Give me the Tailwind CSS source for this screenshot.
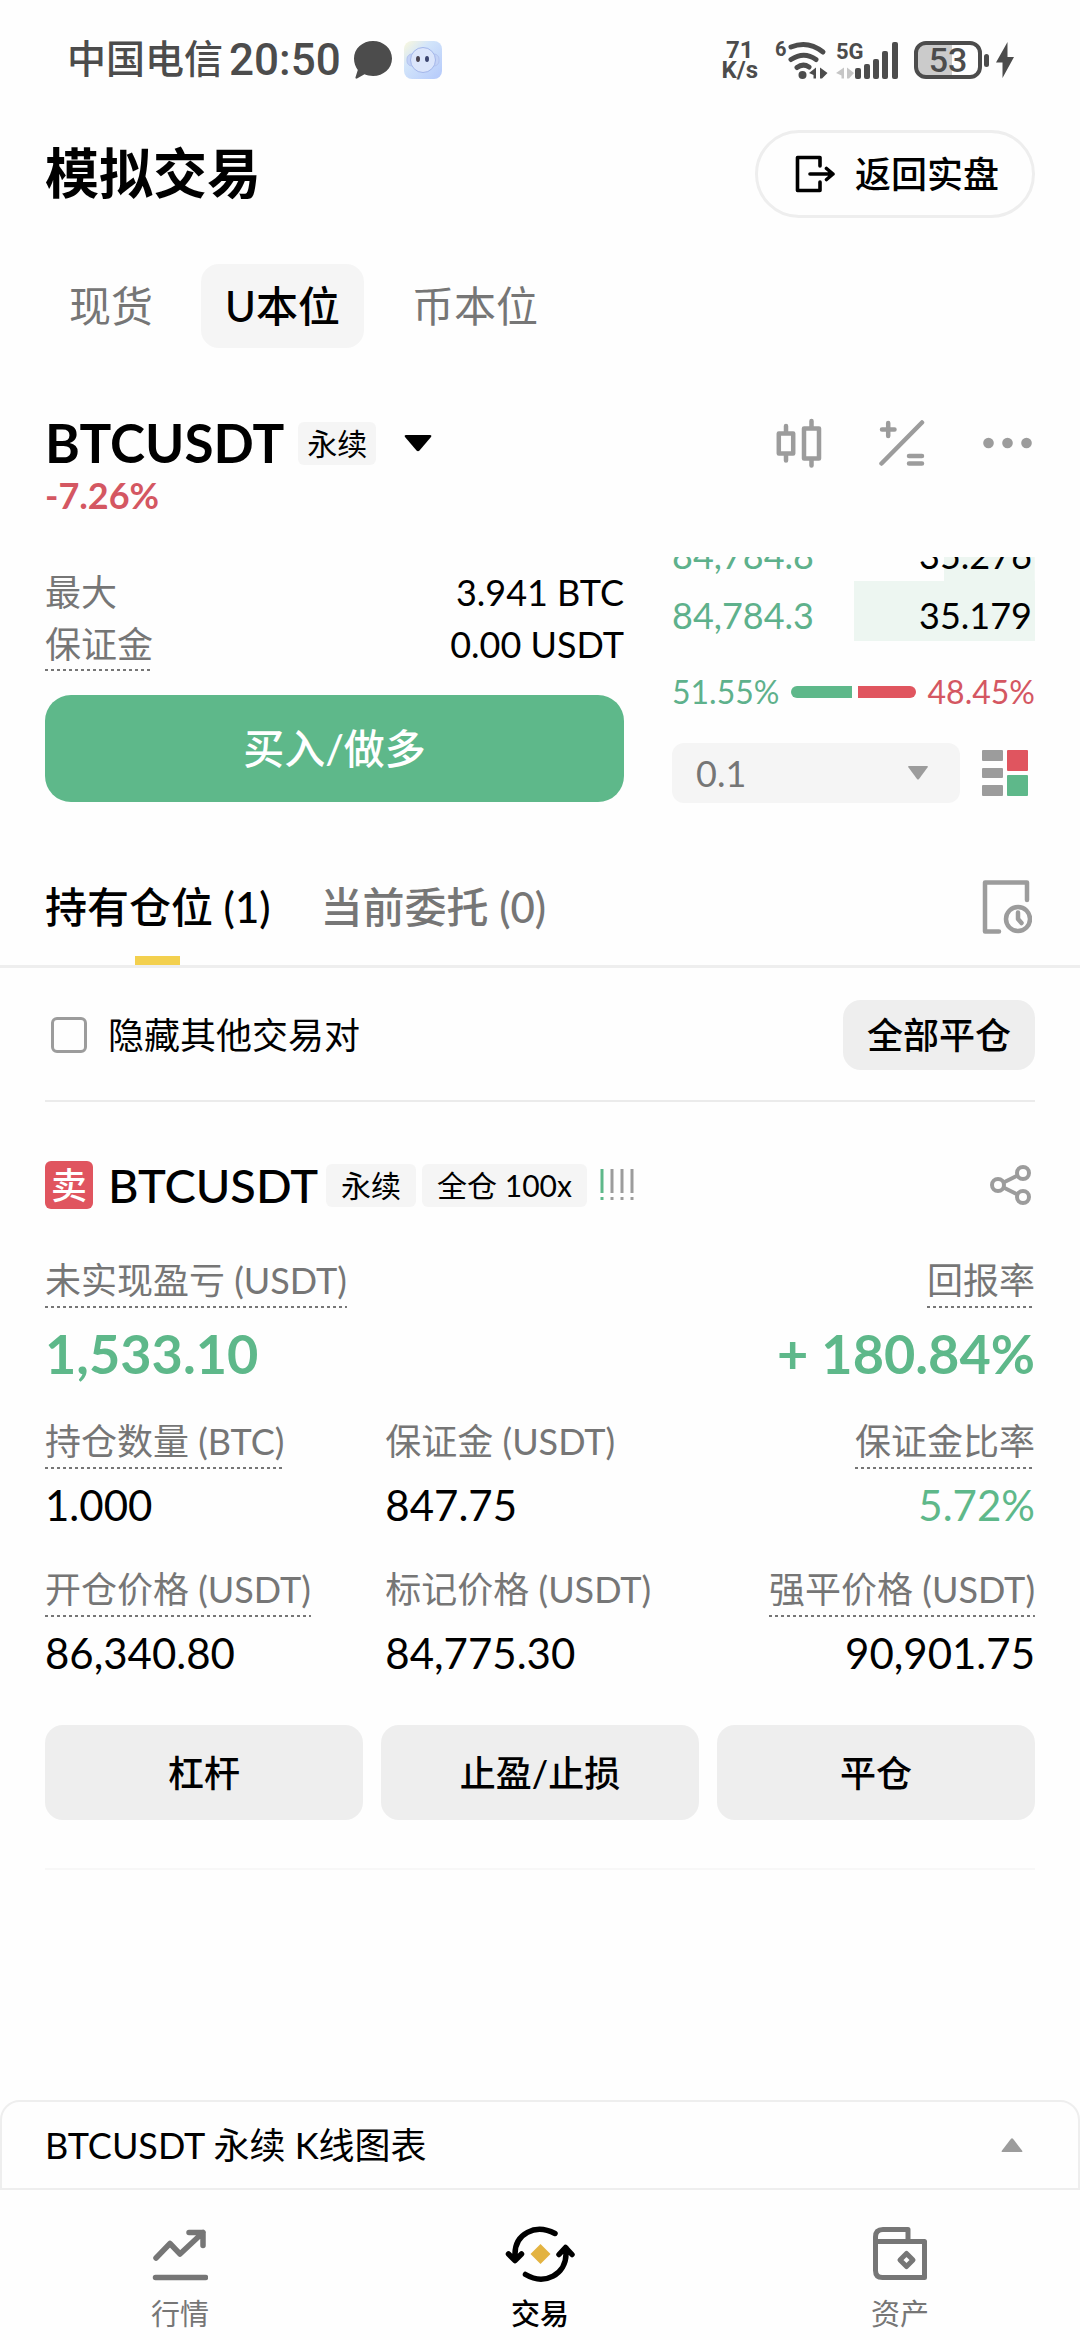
<!DOCTYPE html>
<html lang="zh-CN">
<head>
  <meta charset="UTF-8" />
  <meta name="viewport" content="width=device-width, initial-scale=1.0"/>
  <title>模拟交易</title>
  <script src="https://cdn.jsdelivr.net/npm/@tailwindcss/browser@4"></script>
</head>
<body class="bg-[#fefefe] text-black font-['Lato','Noto_Sans_CJK_SC',sans-serif]">
  <div class="min-h-screen flex flex-col">

    <!-- Status Bar -->
    <div class="h-[120px] pl-[67px] pr-[66px] flex items-center justify-between text-[#4c4c4c] font-['Roboto','Noto_Sans_CJK_SC',sans-serif] font-medium">
      <div class="flex items-center">
        <span class="text-[39px] leading-[48px]">中国电信</span>
        <span class="ml-[6px] text-[44px] leading-[48px]">20:50</span>
        <svg class="ml-[13px] w-[38px] h-[38px]" viewBox="0 0 38 38" fill="#4c4c4c"><path d="M19 0C29.500 0 38 7.500 38 17.500S29.500 35 19 35c-3 0-6-.6-8.500-1.700L3 37.500c-1 .5-1.800-.2-1.500-1.200L3.800 29C1.500 26 0 22 0 17.500 0 7.500 8.500 0 19 0z"/></svg>
        <svg class="ml-[12px] w-[38px] h-[38px]" viewBox="0 0 38 38">
          <defs><linearGradient id="app" x1="0" y1="0" x2="1" y2="1"><stop offset="0" stop-color="#fbf9dc"/><stop offset=".35" stop-color="#d3e5fa"/><stop offset="1" stop-color="#b4c9fb"/></linearGradient></defs>
          <rect width="38" height="38" rx="8" fill="url(#app)"/>
          <rect x="3" y="13" width="32" height="12" rx="5" fill="#c3d2f6" stroke="#b3c3ef"/>
          <circle cx="19" cy="19" r="12.500" fill="#dbe5fb" stroke="#a3b6ea"/>
          <ellipse cx="14" cy="18" rx="2" ry="3" fill="#4a4350"/><ellipse cx="23" cy="18" rx="2" ry="3" fill="#3c4570"/>
        </svg>
      </div>
      <div class="flex items-center">
        <div class="text-[24px] leading-[20px] font-bold text-center">71<br>K/s</div>
        <svg class="ml-[16px] w-[54px] h-[46px]" viewBox="772 36 54 46" fill="none" stroke="#4c4c4c" stroke-width="5" stroke-linecap="round">
          <text x="773" y="55" font-size="20" font-weight="700" fill="#4c4c4c" stroke="none">6</text>
          <path d="M789 46Q806 39 821 51M789 58.500Q802 50 814 58.500M795 66.500Q801 62 807 66"/>
          <circle cx="800.500" cy="74" r="4" fill="#4c4c4c" stroke="none"/>
          <path d="M814 66.500v11h-2.500v-3.500l-4.500-2zM818 66.500v11h2l5.500-5.500z" fill="#4c4c4c" stroke="none"/>
        </svg>
        <svg class="ml-[8px] w-[63px] h-[46px]" viewBox="835 36 63 46" fill="#4c4c4c">
          <text x="835" y="58" font-size="22" font-weight="700">5G</text>
          <path d="M843 66.500v11h-2.500v-3l-5.500-2.500zM846 66.500v11h2l5-5.500z" fill="#c6c6c6"/>
          <rect x="854" y="67" width="6" height="11" rx="2"/><rect x="863" y="63" width="6" height="15" rx="2"/><rect x="872" y="58" width="6" height="20" rx="2"/><rect x="881" y="50" width="6" height="28" rx="2"/><rect x="891" y="41" width="6" height="37" rx="2"/>
        </svg>
        <div class="ml-[15px] w-[68px] h-[38px] border-4 border-[#4c4c4c] rounded-[12px] bg-[linear-gradient(90deg,#cbcbcb_57%,#fefefe_57%)] text-[34px] leading-[30px] text-center">53</div>
        <div class="ml-[2px] w-[5px] h-[13px] rounded-full bg-[#4c4c4c]"></div>
        <svg class="ml-[7px] w-[18px] h-[36px]" viewBox="0 0 18 36" fill="#4c4c4c"><path d="M11.500 0v15H18L6.500 36v-15.500H0z"/></svg>
      </div>
    </div>

    <!-- Header -->
    <header class="px-[45px] pt-[10px] flex items-center justify-between">
      <h1 class="text-[54px] leading-[64px] font-bold">模拟交易</h1>
      <button class="h-[88px] pl-[37px] pr-[33px] border-3 border-[#eee] rounded-full flex items-center text-[36px] font-medium">
        <svg class="w-[40px] h-[38px] mr-[20px]" viewBox="0 0 40 38" fill="none" stroke="#000" stroke-width="3.600" stroke-linecap="round" stroke-linejoin="round"><path d="M25 11V2.500H2.500v33H25V27M15 19h23M31.500 13.500L38 19l-6.500 5.500"/></svg>
        返回实盘
      </button>
    </header>

    <nav class="mt-[46px] pl-[45px] flex text-[42px] leading-[84px] text-[#767676]">
      <a href="#" class="px-[24px]">现货</a>
      <a href="#" class="ml-[24px] px-[24px] rounded-[18px] bg-[#f5f5f5] text-black font-medium">U本位</a>
      <a href="#" class="ml-[24px] px-[24px]">币本位</a>
    </nav>

    <!-- Symbol -->
    <section class="mt-[65px] px-[45px]">
      <div class="h-[60px] flex items-center">
        <h2 class="text-[53px] leading-[60px] font-bold">BTCUSDT</h2>
        <span class="ml-[14px] px-[9px] rounded-[6px] bg-[#f5f5f5] text-[30px] leading-[43px]">永续</span>
        <svg class="ml-[28px] w-[28px] h-[18px]" viewBox="0 0 28 18"><path d="M2 1h24q2 0 1 2L15.500 16.500q-1.500 1.500-3 0L1 3Q0 1 2 1z"/></svg>
        <div class="ml-auto mr-[3px] flex items-center gap-[57px]">
          <button aria-label="K线"><svg class="w-[46px] h-[50px]" viewBox="0 0 46 50" fill="none" stroke="#9c9c9c" stroke-width="4.500" stroke-linecap="round" stroke-linejoin="round"><path d="M2.800 15.500h14.400v20H2.800zM10 8v7M10 36v6.500M28 10.500h15v30H28zM35.500 3v7M35.500 41v6.500"/></svg></button>
          <button aria-label="计算器"><svg class="w-[46px] h-[46px]" viewBox="0 0 46 46" fill="none" stroke="#9c9c9c" stroke-width="4.500" stroke-linecap="round"><path d="M2.500 43.500L43 2.500M3 9.500h12.500M9.200 3v13M30 36h13M30 43.500h13"/></svg></button>
          <button aria-label="更多"><svg class="w-[50px] h-[46px]" viewBox="0 0 50 46" fill="#9c9c9c"><circle cx="6.500" cy="23" r="5.300"/><circle cx="25.500" cy="23" r="5.300"/><circle cx="44.500" cy="23" r="5.300"/></svg></button>
        </div>
      </div>
      <p class="text-[36px] leading-[44px] font-bold text-[#d45762]">-7.26%</p>
    </section>

    <!-- Order Form and Order Book -->
    <section class="mt-[40px] px-[45px] flex gap-[48px]">
      <div class="flex-1 pt-[10px] text-[36px] leading-[50px]">
        <div class="h-[52px] flex justify-between"><span class="text-[#767676]">最大</span><span>3.941 BTC</span></div>
        <div class="h-[52px] flex justify-between">
          <span class="text-[#767676] bg-[repeating-linear-gradient(90deg,#767676_0_3px,transparent_3px_6px)] bg-[length:100%_2px] bg-bottom bg-no-repeat">保证金</span>
          <span>0.00 USDT</span>
        </div>
        <button class="mt-[24px] w-full h-[107px] rounded-[26px] bg-[#5eb88a] text-white text-[41px] font-medium">买入/做多</button>
      </div>
      <div class="w-[363px]">
        <div class="h-[84px] overflow-hidden flex flex-col justify-end text-[36px] leading-[52px]">
          <table class="w-full border-collapse">
            <tr class="h-[60px] bg-[linear-gradient(#edf6f1,#edf6f1)] bg-right bg-no-repeat" style="background-size: 25% 100%">
              <td class="pt-[8px] text-[#5eb18c]">84,784.8</td><td class="pt-[8px] pr-[3px] text-right">35.276</td>
            </tr>
            <tr class="h-[60px] bg-[linear-gradient(#edf6f1,#edf6f1)] bg-right bg-no-repeat" style="background-size: 50% 100%">
              <td class="pt-[8px] text-[#5eb18c]">84,784.3</td><td class="pt-[8px] pr-[3px] text-right">35.179</td>
            </tr>
          </table>
        </div>
        <div class="mt-[27px] flex items-center gap-[12px] text-[32px] leading-[48px]">
          <span class="text-[#5eb18c]">51.55%</span>
          <div class="flex-1 flex gap-[6px]">
            <div class="h-[12px] rounded-l-full bg-[#5eb88a]" style="width: 51.55%"></div>
            <div class="h-[12px] rounded-r-full bg-[#e0555f]" style="width: 48.45%"></div>
          </div>
          <span class="text-[#d45762]">48.45%</span>
        </div>
        <div class="mt-[27px] flex items-center">
          <div class="relative flex-1">
            <select aria-label="精度" class="appearance-none w-full h-[60px] pl-[24px] rounded-[12px] bg-[#f5f5f5] text-[36px] text-[#767676]"><option>0.1</option></select>
            <svg class="absolute right-[32px] top-[23px] w-[20px] h-[14px] pointer-events-none" viewBox="0 0 20 14" fill="#9c9c9c"><path d="M1 0h18q1.500 0 .5 1.500L11 13q-1 1-2 0L.5 1.500Q-.5 0 1 0z"/></svg>
          </div>
          <button aria-label="盘口" class="ml-[22px] mr-[7px]"><svg class="w-[46px] h-[46px]" viewBox="0 0 46 46" fill="#9c9c9c"><rect y="0" width="21" height="11" rx="1"/><rect y="18" width="21" height="10" rx="1"/><rect y="35" width="21" height="11" rx="1"/><rect x="25" y="0" width="21" height="21" rx="1" fill="#e0555f"/><rect x="25" y="25" width="21" height="21" rx="1" fill="#5eb88a"/></svg></button>
        </div>
      </div>
    </section>

    <!-- Position Tabs -->
    <section class="mt-[74px] px-[45px] border-b-3 border-[#eee] flex justify-between">
      <div class="flex gap-[50px] text-[42px] leading-[60px] font-medium">
        <a href="#" class="flex flex-col items-center">持有仓位 (1)<span class="mt-[19px] w-[45px] h-[9px] bg-[#f3d04e]"></span></a>
        <a href="#" class="text-[#767676]">当前委托 (0)</a>
      </div>
      <button aria-label="历史" class="h-[60px] mr-[3px]"><svg class="w-[50px] h-[54px]" viewBox="0 0 50 54" fill="none" stroke="#9c9c9c" stroke-width="4.500" stroke-linecap="round" stroke-linejoin="round"><path d="M17 51.500H3V2.500h42V20"/><circle cx="36" cy="39" r="12"/><path d="M36 32.500V39l3.500 4"/></svg></button>
    </section>

    <main class="px-[45px]">
      <div class="mt-[32px] flex items-center justify-between">
        <div class="flex items-center">
          <input id="hidePairs" type="checkbox" class="appearance-none ml-[6px] w-[36px] h-[36px] border-3 border-[#9c9c9c] rounded-[6px]" />
          <label for="hidePairs" class="pl-[21px] text-[36px] leading-[50px]">隐藏其他交易对</label>
        </div>
        <button class="h-[70px] px-[24px] rounded-[18px] bg-[#eee] text-[36px] font-medium">全部平仓</button>
      </div>
      <hr class="mt-[30px] border-t-2 border-[#ebebeb]" />

      <!-- Position -->
      <div class="mt-[59px] h-[48px] flex items-center">
        <span class="w-[48px] rounded-[6px] bg-[#e0555f] text-white text-center text-[36px] leading-[48px] font-medium">卖</span>
        <h3 class="ml-[15px] text-[47px] leading-[48px] font-medium">BTCUSDT</h3>
        <span class="ml-[8px] px-[15px] rounded-[6px] bg-[#f5f5f5] text-[30px] leading-[43px]">永续</span>
        <span class="ml-[6px] px-[15px] rounded-[6px] bg-[#f5f5f5] text-[30px] leading-[43px]">全仓 100x</span>
        <svg class="ml-[12px] w-[36px] h-[32px]" viewBox="0 0 36 32" stroke="#9c9c9c" stroke-width="3"><path d="M3 0v24M3 28v3" stroke="#5eb88a"/><path d="M13 0v24M13 28v3M23 0v24M23 28v3M33 0v24M33 28v3"/></svg>
        <button aria-label="分享" class="ml-auto mr-[3px]"><svg class="w-[42px] h-[42px]" viewBox="0 0 42 42" fill="none" stroke="#9c9c9c" stroke-width="4"><circle cx="8" cy="21" r="6"/><circle cx="33" cy="9" r="6"/><circle cx="33" cy="33" r="6"/><path d="M13.500 18.500L27.500 11.500M13.500 23.500L27.500 30.500"/></svg></button>
      </div>

      <dl class="mt-[47px] flex justify-between text-[36px] leading-[48px] text-[#767676]">
        <div class="flex flex-col items-start">
          <dt class="h-[52px] bg-[repeating-linear-gradient(90deg,#767676_0_3px,transparent_3px_6px)] bg-[length:100%_2px] bg-bottom bg-no-repeat">未实现盈亏 (USDT)</dt>
          <dd class="mt-[16px] text-[54px] leading-[60px] font-bold text-[#5eb88a]">1,533.10</dd>
        </div>
        <div class="flex flex-col items-end">
          <dt class="h-[52px] bg-[repeating-linear-gradient(90deg,#767676_0_3px,transparent_3px_6px)] bg-[length:100%_2px] bg-bottom bg-no-repeat">回报率</dt>
          <dd class="mt-[16px] text-[54px] leading-[60px] font-bold text-[#5eb88a]">+ 180.84%</dd>
        </div>
      </dl>

      <dl class="mt-[33px] grid grid-cols-[11fr_11fr_10fr] gap-y-[36px] text-[36px] leading-[48px] text-[#767676]">
        <div class="flex flex-col items-start">
          <dt class="h-[52px] bg-[repeating-linear-gradient(90deg,#767676_0_3px,transparent_3px_6px)] bg-[length:100%_2px] bg-bottom bg-no-repeat">持仓数量 (BTC)</dt>
          <dd class="mt-[12px] text-[42px] text-black">1.000</dd>
        </div>
        <div class="flex flex-col items-start">
          <dt class="h-[52px]">保证金 (USDT)</dt>
          <dd class="mt-[12px] text-[42px] text-black">847.75</dd>
        </div>
        <div class="flex flex-col items-end">
          <dt class="h-[52px] bg-[repeating-linear-gradient(90deg,#767676_0_3px,transparent_3px_6px)] bg-[length:100%_2px] bg-bottom bg-no-repeat">保证金比率</dt>
          <dd class="mt-[12px] text-[42px] text-[#5eb88a]">5.72%</dd>
        </div>
        <div class="flex flex-col items-start">
          <dt class="h-[52px] bg-[repeating-linear-gradient(90deg,#767676_0_3px,transparent_3px_6px)] bg-[length:100%_2px] bg-bottom bg-no-repeat">开仓价格 (USDT)</dt>
          <dd class="mt-[12px] text-[42px] text-black">86,340.80</dd>
        </div>
        <div class="flex flex-col items-start">
          <dt class="h-[52px]">标记价格 (USDT)</dt>
          <dd class="mt-[12px] text-[42px] text-black">84,775.30</dd>
        </div>
        <div class="flex flex-col items-end">
          <dt class="h-[52px] bg-[repeating-linear-gradient(90deg,#767676_0_3px,transparent_3px_6px)] bg-[length:100%_2px] bg-bottom bg-no-repeat">强平价格 (USDT)</dt>
          <dd class="mt-[12px] text-[42px] text-black">90,901.75</dd>
        </div>
      </dl>

      <div class="mt-[48px] grid grid-cols-3 gap-[18px] text-[36px] font-medium">
        <button class="h-[95px] rounded-[18px] bg-[#eee]">杠杆</button>
        <button class="h-[95px] rounded-[18px] bg-[#eee]">止盈/止损</button>
        <button class="h-[95px] rounded-[18px] bg-[#eee]">平仓</button>
      </div>
      <hr class="mt-[48px] border-t-2 border-[#f7f7f7]" />
    </main>

    <!-- Chart Drawer -->
    <button class="mt-auto h-[90px] px-[43px] border-2 border-[#eee] rounded-t-[20px] flex items-center justify-between text-[36px]">
      BTCUSDT 永续 K线图表
      <svg class="mr-[12px] w-[22px] h-[14px]" viewBox="0 0 22 14" fill="#9c9c9c"><path d="M1.500 14h19q1.500 0 .5-1.500L12 .8q-1-1-2 0L1 12.500Q0 14 1.500 14z"/></svg>
    </button>

    <!-- Bottom Nav -->
    <nav class="pt-[36px] pb-[6px] grid grid-cols-3 text-[29px] leading-[40px] text-[#767676]">
      <a href="#" class="flex flex-col items-center gap-[12px]">
        <svg class="w-[56px] h-[56px]" viewBox="0 0 56 56" fill="none" stroke="#767676" stroke-width="5.500" stroke-linecap="round" stroke-linejoin="round"><path d="M4 32L18 17.500 28 28 51 6.500M37 6.500h14v13M3.500 51.500h50"/></svg>
        行情
      </a>
      <a href="#" class="flex flex-col items-center gap-[12px] text-black font-medium">
        <svg class="w-[70px] h-[56px]" viewBox="505 2226 70 56" fill="none" stroke="#000" stroke-width="5.500" stroke-linecap="round" stroke-linejoin="round"><path d="M555 2233.500C535 2223 515 2234 515 2254V2260M508.500 2254L515 2260.500 521.500 2254M525.500 2274.500C545 2286 566 2274 566 2254V2248M559 2254.500L565.500 2247.500 572 2254.500"/><path d="M540.500 2244l10 10-10 10-10-10z" fill="#e3b341" stroke="none"/></svg>
        交易
      </a>
      <a href="#" class="flex flex-col items-center gap-[12px]">
        <svg class="w-[56px] h-[56px]" viewBox="0 0 56 56" fill="none" stroke="#767676" stroke-width="5" stroke-linejoin="round"><path d="M3.500 15.500v29q0 7 7 7h42v-36h-49zM3.500 16V11q0-7.500 7.500-7.500h25V15.500"/><path d="M34.500 27.500l6.500 6.500-6.500 6.500-6.500-6.500z"/></svg>
        资产
      </a>
    </nav>
  </div>
</body>
</html>
